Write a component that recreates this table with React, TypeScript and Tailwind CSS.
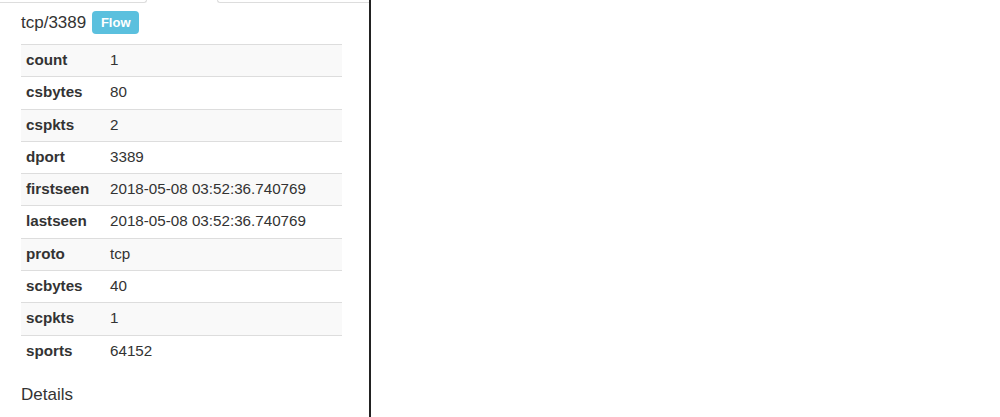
const ROWS: [string, string][] = [
  ["count", "1"],
  ["csbytes", "80"],
  ["cspkts", "2"],
  ["dport", "3389"],
  ["firstseen", "2018-05-08 03:52:36.740769"],
  ["lastseen", "2018-05-08 03:52:36.740769"],
  ["proto", "tcp"],
  ["scbytes", "40"],
  ["scpkts", "1"],
  ["sports", "64152"],
];

export default function App() {
  return (
    <div
      className="flex h-[417px] w-[1000px] bg-white text-[#333]"
      style={{ fontFamily: '"Liberation Sans", Arial, sans-serif' }}
    >
      <div className="flex w-[371px] shrink-0 flex-col border-r-2 border-[#222]">
        {/* tab strip, cut off at the top */}
        <div className="flex h-[3px]">
          <div className="w-[147px] rounded-br-[3px] border-r border-b border-[#ddd]" />
          <div className="w-[70px]" />
          <div className="flex-1 rounded-bl-[3px] border-l border-b border-[#ddd]" />
        </div>

        <div className="px-[21px]">
          <div className="mt-[8px] flex h-[23px] items-center gap-[6px]">
            <span className="text-[17px] leading-[23px]">tcp/3389</span>
            <span className="flex h-[23px] w-[47px] items-center justify-center rounded-[4px] bg-[#5bc0de] text-[13px] font-bold text-white">
              Flow
            </span>
          </div>

          <table className="mt-[10px] w-[321px] border-collapse text-[15.2px]">
            <tbody>
              {ROWS.map(([k, v], i) => (
                <tr key={k} className={i % 2 === 0 ? "bg-[#f9f9f9]" : ""}>
                  <td className="w-[84px] border-t border-[#ddd] px-[5px] pt-[4px] pb-[6px] leading-[21.3px] font-bold">
                    {k}
                  </td>
                  <td className="border-t border-[#ddd] px-[5px] pt-[4px] pb-[6px] leading-[21.3px]">
                    {v}
                  </td>
                </tr>
              ))}
            </tbody>
          </table>

          <div className="mt-[16px] text-[17px] leading-[24px]">Details</div>
        </div>
      </div>
      <div className="flex-1" />
    </div>
  );
}
